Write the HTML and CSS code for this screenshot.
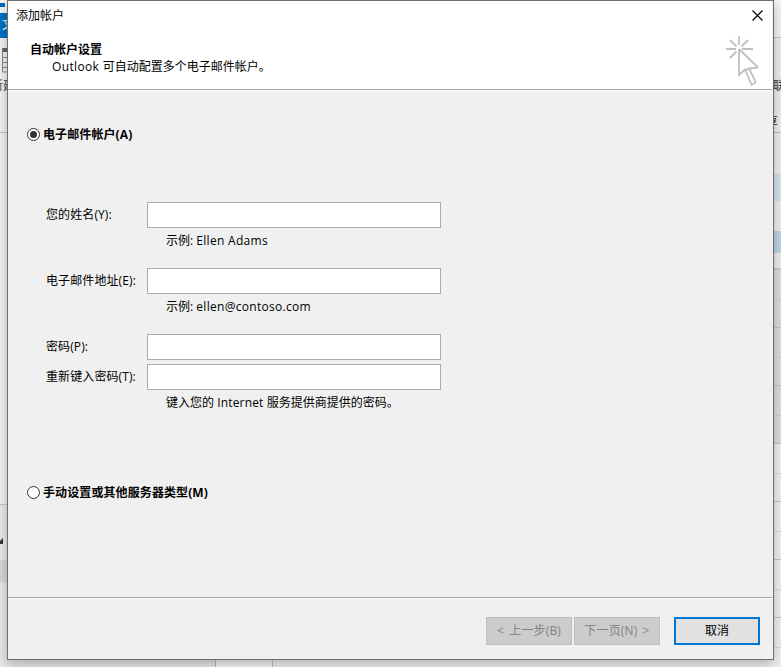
FILE: index.html
```html
<!DOCTYPE html>
<html lang="zh-CN">
<head>
<meta charset="utf-8">
<title>添加帐户</title>
<link rel="stylesheet" href="styles.css">
</head>
<body>
<div class="app">
  <div class="app-main">
    <div class="nav">
      <div class="nav-title"><i></i></div>
      <div class="nav-file">文</div>
      <div class="nav-ribbon">
        <svg class="table-icon" width="6" height="25" viewBox="0 0 6 25"><path d="M0 0h6v4H0z" fill="#666"/><path d="M.5 2v22H6M.5 9.500H6M.5 14.500H6M.5 19.500H6M5.500 4v20" fill="none" stroke="#888"/></svg>
        <span class="nav-new">新建</span>
      </div>
      <div class="nav-list"></div>
      <div class="nav-tree"><svg width="3" height="6" viewBox="0 0 3 6"><path d="M3 0v6H0V3z" fill="#333"/></svg></div>
      <div class="nav-selected"></div>
      <div class="nav-rest"></div>
    </div>
    <div class="view">
      <div class="view-title"></div>
      <div class="view-ribbon"><span class="view-contact">联</span><span class="view-share">享</span></div>
      <div class="view-space"></div>
      <div class="view-day"></div>
      <div class="view-space"></div>
      <div class="view-today"></div>
      <div class="view-gap"></div>
      <div class="slots off"><i></i><i></i><i></i></div>
      <div class="slots"><i></i><i></i><i></i><i></i></div>
    </div>
  </div>
  <div class="app-bottom"><i class="pane"></i><i class="ruler"></i><i class="calendar"></i></div>
</div>

<main class="dialog">
  <header class="head">
    <div class="titlebar">
      <span>添加帐户</span>
      <svg class="close" width="11" height="11" viewBox="0 0 11 11"><path d="M.5.5l10 10M10.500.5l-10 10" fill="none" stroke="#000" stroke-width="1.150"/></svg>
    </div>
    <div class="intro">
      <div>
        <h1>自动帐户设置</h1>
        <p><span class="outlook">Outlook </span>可自动配置多个电子邮件帐户。</p>
      </div>
      <svg class="pointer" width="34" height="50" viewBox="0 0 34 50" fill="none" stroke="#c0c0c0" stroke-width="1.800">
        <path d="M13 0v9M0 13h10M16 13h11M4 4l6.500 6.500M22 4l-6.500 6.500M4 22l6.500-6.500"/>
        <path d="M13 13v26l6-5.500h3.500M32 31.500L13 13M32 31.500l-9 1 6.500 13-.5 1.500-3.500 1.500-6.500-15"/>
      </svg>
    </div>
  </header>

  <section class="content">
    <label class="option"><span class="radio on"></span><b>电子邮件帐户(A)</b></label>
    <div class="form">
      <label>您的姓名(Y):</label><span class="field"></span>
      <p class="hint">示例: <span class="latin">Ellen Adams</span></p>
      <label>电子邮件地址(E):</label><span class="field"></span>
      <p class="hint">示例: <span class="latin">ellen@contoso.com</span></p>
      <label>密码(P):</label><span class="field"></span>
      <label class="retype">重新键入密码(T):</label><span class="field retype"></span>
      <p class="hint">键入您的<span class="internet"> Internet </span>服务提供商提供的密码。</p>
    </div>
    <label class="option"><span class="radio"></span><b>手动设置或其他服务器类型(M)</b></label>
  </section>

  <footer class="foot">
    <span class="btn disabled">&lt; 上一步(B)</span>
    <span class="btn disabled">下一页(N) &gt;</span>
    <span class="btn cancel">取消</span>
  </footer>
</main>
</body>
</html>
```
FILE: styles.css
```css
* { box-sizing: border-box; }
body {
  margin: 0;
  width: 781px;
  height: 667px;
  overflow: hidden;
  font: 12px/16px "Open Sans", "Noto Sans CJK SC", sans-serif;
  color: #000;
}
h1, p { margin: 0; font-size: 12px; }
i { display: block; }

/* window behind the dialog */
.app { height: 667px; display: flex; flex-direction: column; background: #f0f0f0; }
.app-main { height: 660px; display: flex; justify-content: space-between; }
.nav { width: 8px; display: flex; flex-direction: column; overflow: hidden; }
.nav-title { height: 13px; padding-top: 3px; background: #f5f5f5; }
.nav-title i { width: 5px; height: 4px; background: #0067b8; }
.nav-file { height: 25px; padding: 4px 0 0 2px; background: #0072c6; color: #fff; }
.nav-ribbon { height: 95px; padding-top: 10px; border-bottom: 1px solid #c8c8c8; background: #f4f4f4; }
.table-icon { display: block; margin-left: 2px; }
.nav-new { display: block; width: 30px; margin: 5px 0 0 -9px; color: #444; }
.nav-list { height: 372px; border-bottom: 1px solid #c5c5c5; background: #f3f3f3; }
.nav-tree { height: 55px; padding-top: 33px; background: #ebebeb; }
.nav-tree svg { display: block; }
.nav-selected { height: 22px; background: #d8d8d8; }
.nav-rest { flex: 1; background: #e9e9e9; }

.view { width: 8px; display: flex; flex-direction: column; overflow: hidden; }
.view > div { flex: none; }
.view-title { height: 38px; border-bottom: 1px solid #c5c5c5; background: #f7f7f7; }
.view-ribbon { height: 95px; padding-top: 40px; border-bottom: 1px solid #bdbdbd; background: #f0f0f0; color: #333; }
.view-contact { display: block; }
.view-share { display: block; margin: 20px 0 0 -7px; }
.view-space { height: 41px; background: #f0f0f0; }
.view-day { height: 27px; background: #d4e5ee; }
.view-day + .view-space { height: 30px; }
.view-today { height: 22px; background: #bcd6e9; }
.view-gap { height: 15px; background: #f0f0f0; }
.slots { background: #f2f2f2; }
.slots.off { background: #dfdfdf; border-top: 2px solid #c8c8c8; }
.slots i { height: 58px; border-bottom: 1px solid #c6c6c6; }
.slots i::before { content: ""; display: block; height: 29px; border-bottom: 1px dotted #c6c6c6; }

.app-bottom { height: 7px; display: flex; }
.pane { width: 216px; border-right: 1px solid #bcbcbc; background: #e9e9e9; }
.ruler { width: 57px; border-right: 1px solid #c4c4c4; background: #f5f5f5; }
.calendar { flex: 1; background: #f0f0f0; }

/* dialog */
.dialog {
  position: absolute;
  left: 7px;
  top: 0;
  width: 767px;
  height: 660px;
  border: 1px solid #6e6e6e;
  background: #f0f0f0;
  box-shadow: 0 4px 12px rgba(0, 0, 0, .28);
  display: flex;
  flex-direction: column;
}
.head { height: 89px; margin-right: 1px; background: #fff; border-bottom: 1px solid #a0a0a0; box-shadow: 0 1px #fff; }
.titlebar { height: 38px; padding: 7px 9px 0 8px; display: flex; justify-content: space-between; }
.close { margin-top: 2px; }
.intro { display: flex; justify-content: space-between; padding: 0 12px 0 22px; }
.intro h1 { margin-top: 2px; line-height: 17px; }
.intro p { padding-left: 22px; line-height: 17px; }
.pointer { margin-top: -3px; }
.outlook { letter-spacing: .35px; }
.latin { letter-spacing: .3px; }
.internet { letter-spacing: .15px; }

.content { height: 507px; padding: 36px 0 0 19px; }
.option { display: flex; align-items: center; gap: 3px; height: 16px; }
.option b { padding-top: 2px; letter-spacing: .1px; }
.radio { width: 13px; height: 13px; border: 1px solid #333; border-radius: 50%; background: #fff; display: grid; place-items: center; }
.radio.on::before { content: ""; width: 7px; height: 7px; border-radius: 50%; background: #333; }
.form { display: grid; grid-template-columns: 101px 294px; margin: 60px 0 54px 19px; }
.form label { line-height: 26px; white-space: nowrap; letter-spacing: .1px; }
.field { height: 26px; border: 1px solid #ababab; background: #fff; }
.form .retype { margin-top: 4px; }
.hint { grid-column: 2; height: 40px; padding: 5px 0 0 19px; white-space: nowrap; }

.foot { flex: 1; margin-right: 1px; border-top: 1px solid #a0a0a0; box-shadow: inset 0 1px #fff; padding: 19px 12px 0; display: flex; justify-content: flex-end; gap: 2px; }
.btn { width: 86px; height: 28px; border: 1px solid #bfbfbf; background: #ccc; text-align: center; line-height: 26px; white-space: nowrap; }
.disabled { color: #838383; word-spacing: 2px; letter-spacing: .15px; }
.cancel { margin-left: 12px; border: 2px solid #0078d7; background: #e1e1e1; line-height: 24px; }
```
